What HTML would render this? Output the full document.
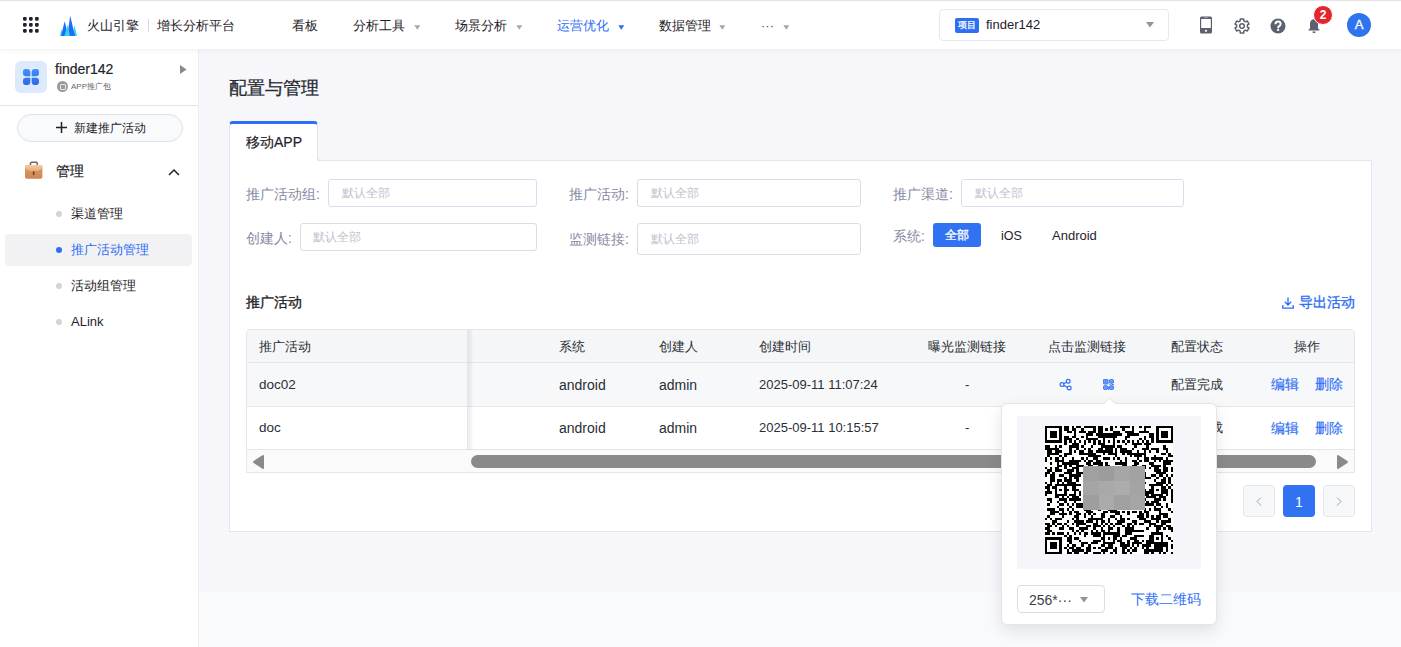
<!DOCTYPE html>
<html><head><meta charset="utf-8">
<style>
*{box-sizing:border-box;margin:0;padding:0}
html,body{width:1401px;height:647px;overflow:hidden}
body{position:relative;background:#f7f7fb;font-family:"Liberation Sans",sans-serif;color:#1f2329;font-size:14px}
.a{position:absolute;white-space:nowrap}
.t{position:absolute;white-space:nowrap;line-height:1}
</style></head><body>

<!-- lower background band -->
<div class="a" style="left:199px;top:592px;width:1202px;height:55px;background:#f9fafc"></div>

<!-- top nav -->
<div class="a" style="left:0;top:0;width:1401px;height:49px;background:#fff;border-top:1px solid #e3e5e4;box-shadow:0 1px 5px rgba(30,30,60,.07);z-index:5">
  <!-- grid icon -->
  <svg class="a" style="left:23px;top:16px" width="16" height="16" viewBox="0 0 16 16"><g fill="#1f2329">
    <rect x="0" y="0" width="3.7" height="3.7" rx="1.1"/><rect x="6" y="0" width="3.7" height="3.7" rx="1.1"/><rect x="12" y="0" width="3.7" height="3.7" rx="1.1"/>
    <rect x="0" y="6" width="3.7" height="3.7" rx="1.1"/><rect x="6" y="6" width="3.7" height="3.7" rx="1.1"/><rect x="12" y="6" width="3.7" height="3.7" rx="1.1"/>
    <rect x="0" y="12" width="3.7" height="3.7" rx="1.1"/><rect x="6" y="12" width="3.7" height="3.7" rx="1.1"/><rect x="12" y="12" width="3.7" height="3.7" rx="1.1"/>
  </g></svg>
  <!-- logo -->
  <svg class="a" style="left:60px;top:14px" width="17" height="21" viewBox="0 -1 17 21">
    <polygon points="0,20 1.5,13.3 3.2,20" fill="#33d7d9"/>
    <polygon points="1,20 4.7,5.2 8.3,20" fill="#1c6dff"/>
    <polygon points="12.3,20 14.5,9.6 17,20" fill="#33d7d9"/>
    <polygon points="7.3,20 10.2,-0.3 15,20" fill="#1c6dff"/>
    <polygon points="4.5,20 7.6,8.7 9.9,20" fill="#33d7d9"/>
  </svg>
  <div class="t" style="left:87px;top:18px;font-size:13px;color:#1f2329">火山引擎</div>
  <div class="a" style="left:148px;top:18px;width:1px;height:13px;background:#d5d9e3"></div>
  <div class="t" style="left:157px;top:18px;font-size:13px;color:#1f2329">增长分析平台</div>

  <div class="t" style="left:292px;top:18px;font-size:13px;color:#1f2329">看板</div>
  <div class="t" style="left:353px;top:18px;font-size:13px;color:#1f2329">分析工具</div>
  <svg class="a" style="left:413.5px;top:23.5px" width="7" height="5" viewBox="0 0 7 5"><polygon points="0.3,0.3 6.3,0.3 3.3,4.8" fill="#a3a8b3"/></svg>
  <div class="t" style="left:455px;top:18px;font-size:13px;color:#1f2329">场景分析</div>
  <svg class="a" style="left:515.5px;top:23.5px" width="7" height="5" viewBox="0 0 7 5"><polygon points="0.3,0.3 6.3,0.3 3.3,4.8" fill="#a3a8b3"/></svg>
  <div class="t" style="left:557px;top:18px;font-size:13px;color:#2e6ef5">运营优化</div>
  <svg class="a" style="left:617.5px;top:23.5px" width="7" height="5" viewBox="0 0 7 5"><polygon points="0.3,0.3 6.3,0.3 3.3,4.8" fill="#2e6ef5"/></svg>
  <div class="t" style="left:659px;top:18px;font-size:13px;color:#1f2329">数据管理</div>
  <svg class="a" style="left:719px;top:23.5px" width="7" height="5" viewBox="0 0 7 5"><polygon points="0.3,0.3 6.3,0.3 3.3,4.8" fill="#a3a8b3"/></svg>
  <div class="t" style="left:761px;top:18px;font-size:13px;color:#4e535b">···</div>
  <svg class="a" style="left:783px;top:23.5px" width="7" height="5" viewBox="0 0 7 5"><polygon points="0.3,0.3 6.3,0.3 3.3,4.8" fill="#a3a8b3"/></svg>

  <!-- project select -->
  <div class="a" style="left:939px;top:8px;width:230px;height:32px;border:1px solid #e8e9ee;border-radius:4px;background:#fff"></div>
  <div class="a" style="left:955px;top:17px;width:24px;height:15px;background:#2e6ef5;border-radius:2px;color:#fff;font-size:8.5px;line-height:15px;text-align:center;-webkit-text-stroke:0.25px #fff">项目</div>
  <div class="t" style="left:986px;top:16.5px;font-size:13px;color:#1f2329">finder142</div>
  <svg class="a" style="left:1146px;top:21px" width="8" height="6" viewBox="0 0 8 6"><polygon points="0,0 8,0 4,5.5" fill="#8f959e"/></svg>

  <!-- phone -->
  <svg class="a" style="left:1200px;top:15px" width="12" height="18" viewBox="0 0 12 18">
    <rect x="0" y="0.5" width="12" height="17" rx="1.5" fill="#5b616e"/>
    <rect x="1.2" y="3" width="9.6" height="9" fill="#fff"/>
    <rect x="4" y="1.3" width="4" height="0.9" fill="#9aa0ab"/>
    <circle cx="6" cy="14.8" r="1.1" fill="#fff"/>
  </svg>
  <!-- gear -->
  <svg class="a" style="left:1234px;top:17px" width="16" height="16" viewBox="0 0 16 16">
    <path d="M6.21 2.80L6.25 0.97L9.75 0.97L9.79 2.80L11.61 3.85L13.22 2.96L14.97 6.00L13.40 6.95L13.40 9.05L14.97 10.00L13.22 13.04L11.61 12.15L9.79 13.20L9.75 15.03L6.25 15.03L6.21 13.20L4.39 12.15L2.78 13.04L1.03 10.00L2.60 9.05L2.60 6.95L1.03 6.00L2.78 2.96L4.39 3.85Z" fill="none" stroke="#5b616e" stroke-width="1.5" stroke-linejoin="round"/>
    <circle cx="8" cy="8" r="2.3" fill="none" stroke="#5b616e" stroke-width="1.5"/>
  </svg>
  <!-- question -->
  <svg class="a" style="left:1270px;top:17px" width="16" height="16" viewBox="0 0 16 16">
    <circle cx="8" cy="8" r="7.5" fill="#5b616e"/>
    <path d="M5.5 6.2c0-1.5 1.1-2.6 2.6-2.6s2.5 1 2.5 2.3c0 1.2-.7 1.7-1.5 2.2-.6.4-.9.8-.9 1.6v.6" fill="none" stroke="#fff" stroke-width="2"/>
    <rect x="7.1" y="11" width="2" height="1.9" fill="#fff"/>
  </svg>
  <!-- bell -->
  <svg class="a" style="left:1308px;top:17px" width="12" height="16" viewBox="0 0 12 16">
    <path d="M6 1.2c2.6 0 4 2 4 4.6v4.6l1.5 1.4v.6H.5v-.6L2 10.4V5.8C2 3.2 3.4 1.2 6 1.2z" fill="#5b616e"/>
    <path d="M4.4 13.6h3.2c0 .9-.7 1.6-1.6 1.6s-1.6-.7-1.6-1.6z" fill="#5b616e"/>
  </svg>
  <div class="a" style="left:1313px;top:4px;width:20px;height:20px;border-radius:50%;background:#e3262b;border:1px solid #fff;color:#fff;font-size:12px;font-weight:bold;line-height:18px;text-align:center">2</div>
  <!-- avatar -->
  <div class="a" style="left:1347px;top:12px;width:24px;height:24px;border-radius:50%;background:#2f74ee;color:#fff;font-size:13px;line-height:24px;text-align:center;-webkit-text-stroke:0.3px #fff">A</div>
</div>

<!-- sidebar -->
<div class="a" style="left:0;top:49px;width:199px;height:598px;background:#fff;border-right:1px solid #eeeff1">
</div>
<div class="a" style="left:15px;top:61px;width:32px;height:32px;border-radius:6px;background:#dde9fd"></div>
<svg class="a" style="left:23px;top:69px" width="16" height="16" viewBox="0 0 16 16">
  <defs><linearGradient id="pg" gradientUnits="userSpaceOnUse" x1="0" y1="0" x2="0" y2="16"><stop offset="0" stop-color="#3f92f8"/><stop offset="1" stop-color="#2d68e6"/></linearGradient></defs>
  <g fill="url(#pg)">
  <path d="M7.3 7.3H3.2A3.2 3.2 0 0 1 0 4.1V2.4A2.4 2.4 0 0 1 2.4 0H4.1A3.2 3.2 0 0 1 7.3 3.2Z"/>
  <path d="M8.7 7.3H12.8A3.2 3.2 0 0 0 16 4.1V2.4A2.4 2.4 0 0 0 13.6 0H11.9A3.2 3.2 0 0 0 8.7 3.2Z"/>
  <path d="M7.3 8.7H3.2A3.2 3.2 0 0 0 0 11.9V13.6A2.4 2.4 0 0 0 2.4 16H4.1A3.2 3.2 0 0 0 7.3 12.8Z"/>
  <path d="M8.7 8.7H12.8A3.2 3.2 0 0 1 16 11.9V13.6A2.4 2.4 0 0 1 13.6 16H11.9A3.2 3.2 0 0 1 8.7 12.8Z"/>
  </g>
</svg>
<div class="t" style="left:55px;top:62px;font-size:14px;color:#1f2329;-webkit-text-stroke:0.2px #1f2329">finder142</div>
<div class="a" style="left:57px;top:81px;width:11px;height:11px;border-radius:50%;background:#9a9a9a"></div>
<div class="a" style="left:59.5px;top:83.5px;width:6px;height:6px;border:1px solid #f4f4f4;border-radius:1px;opacity:.85"></div>
<div class="t" style="left:71px;top:83px;font-size:8px;color:#646a73">APP推广包</div>
<svg class="a" style="left:180px;top:65px" width="7" height="9" viewBox="0 0 7 9"><polygon points="0,0 6.5,4.5 0,9" fill="#8a8a8a"/></svg>
<div class="a" style="left:0;top:105px;width:198px;height:1px;background:#e5e6eb"></div>

<div class="a" style="left:17px;top:114px;width:166px;height:28px;border:1px solid #dfe1e8;border-radius:14px;background:#f9fafc"></div>
<svg class="a" style="left:56px;top:122px" width="11" height="11" viewBox="0 0 11 11"><path d="M5.5 0v11M0 5.5h11" stroke="#1f2329" stroke-width="1.5"/></svg>
<div class="t" style="left:74px;top:122px;font-size:12px;color:#1f2329">新建推广活动</div>

<svg class="a" style="left:25px;top:161px" width="18" height="18" viewBox="0 0 18 18">
  <defs><linearGradient id="bc" x1="0" y1="0" x2="0" y2="1"><stop offset="0" stop-color="#e0a06a"/><stop offset="1" stop-color="#cc8550"/></linearGradient>
  <linearGradient id="bf" x1="0" y1="0" x2="0" y2="1"><stop offset="0" stop-color="#f6cd9c"/><stop offset="1" stop-color="#dea673"/></linearGradient></defs>
  <path d="M5.5 4.3V2.2c0-.6.4-1 1-1h4.7c.6 0 1 .4 1 1v2.1" fill="none" stroke="#6e6660" stroke-width="1.5"/>
  <rect x="0" y="4" width="17.4" height="13.7" rx="2" fill="url(#bc)"/>
  <path d="M0 6c0-1.1.9-2 2-2h13.4c1.1 0 2 .9 2 2v1.2c-2 2.6-4.9 3.7-8.7 3.7S2 9.8 0 7.2z" fill="url(#bf)"/>
  <path d="M0.6 8.3c2.2 2.2 4.9 3 8.1 3s5.9-.8 8.1-3" fill="none" stroke="#b27447" stroke-width=".5" opacity=".6"/>
  <rect x="7.8" y="10" width="1.8" height="4.2" rx=".9" fill="#7a4a24"/>
</svg>
<div class="t" style="left:56px;top:164px;font-size:14px;color:#1f2329;font-weight:400;-webkit-text-stroke:0.2px currentColor">管理</div>
<svg class="a" style="left:168px;top:168px" width="12" height="8" viewBox="0 0 12 8"><path d="M1 7l5-5 5 5" fill="none" stroke="#1f2329" stroke-width="1.5"/></svg>

<div class="a" style="left:5px;top:234px;width:187px;height:32px;border-radius:4px;background:#f2f2f4"></div>
<div class="a" style="left:56px;top:211px;width:6px;height:6px;border-radius:50%;background:#d0d3d9"></div>
<div class="t" style="left:71px;top:207px;font-size:13px;color:#1f2329">渠道管理</div>
<div class="a" style="left:56px;top:247px;width:6px;height:6px;border-radius:50%;background:#2e6ef5"></div>
<div class="t" style="left:71px;top:243px;font-size:13px;color:#2e6ef5">推广活动管理</div>
<div class="a" style="left:56px;top:283px;width:6px;height:6px;border-radius:50%;background:#d0d3d9"></div>
<div class="t" style="left:71px;top:279px;font-size:13px;color:#1f2329">活动组管理</div>
<div class="a" style="left:56px;top:319px;width:6px;height:6px;border-radius:50%;background:#d0d3d9"></div>
<div class="t" style="left:71px;top:315px;font-size:13px;color:#1f2329">ALink</div>

<!-- main -->
<div class="t" style="left:229px;top:78.5px;font-size:18px;color:#262a31;font-weight:400;-webkit-text-stroke:0.3px currentColor">配置与管理</div>

<!-- card -->
<div class="a" style="left:229px;top:160px;width:1143px;height:372px;background:#fff;border:1px solid #e5e6eb"></div>
<!-- tab -->
<div class="a" style="left:229px;top:121px;width:89px;height:40px;background:#fff;border:1px solid #e5e6eb;border-bottom:none;border-top:3px solid #2e6ef5;border-radius:4px 4px 0 0"></div>
<div class="a" style="left:317px;top:150px;width:1055px;height:11px;background:#f7f7fb;border-left:1px solid #e5e6eb;border-bottom:1px solid #e5e6eb;border-bottom-left-radius:4px"></div>
<div class="t" style="left:246px;top:134.5px;font-size:14px;color:#1f2329;-webkit-text-stroke:0.2px #1f2329">移动APP</div>

<!-- filters -->
<div class="t" style="left:246px;top:187px;font-size:14px;color:#8a8aa5">推广活动组:</div>
<div class="a" style="left:328px;top:179px;width:209px;height:28px;border:1px solid #dcdcf0;border-radius:3px;background:#fff"></div>
<div class="t" style="left:342px;top:187px;font-size:12px;color:#c0c0cc">默认全部</div>

<div class="t" style="left:246px;top:231px;font-size:14px;color:#8a8aa5">创建人:</div>
<div class="a" style="left:300px;top:223px;width:237px;height:28px;border:1px solid #dcdce6;border-radius:3px;background:#fff"></div>
<div class="t" style="left:313px;top:231px;font-size:12px;color:#c0c0cc">默认全部</div>

<div class="t" style="left:569px;top:187px;font-size:14px;color:#8a8aa5">推广活动:</div>
<div class="a" style="left:637px;top:179px;width:224px;height:28px;border:1px solid #dcdce6;border-radius:3px;background:#fff"></div>
<div class="t" style="left:651px;top:187px;font-size:12px;color:#c0c0cc">默认全部</div>

<div class="t" style="left:569px;top:232px;font-size:14px;color:#8a8aa5">监测链接:</div>
<div class="a" style="left:637px;top:223px;width:224px;height:32px;border:1px solid #dcdce6;border-radius:3px;background:#fff"></div>
<div class="t" style="left:651px;top:233px;font-size:12px;color:#c0c0cc">默认全部</div>

<div class="t" style="left:893px;top:187px;font-size:14px;color:#8a8aa5">推广渠道:</div>
<div class="a" style="left:961px;top:179px;width:223px;height:28px;border:1px solid #dcdcf0;border-radius:3px;background:#fff"></div>
<div class="t" style="left:975px;top:187px;font-size:12px;color:#c0c0cc">默认全部</div>

<div class="t" style="left:893px;top:229px;font-size:14px;color:#8a8aa5">系统:</div>
<div class="a" style="left:933px;top:223px;width:48px;height:24px;border-radius:3px;background:#3072f2;color:#fff;font-size:12px;line-height:24px;text-align:center;-webkit-text-stroke:0.35px #fff">全部</div>
<div class="t" style="left:1001px;top:229.5px;font-size:12.5px;color:#1f2329">iOS</div>
<div class="t" style="left:1052px;top:229px;font-size:13px;color:#1f2329">Android</div>

<!-- section title -->
<div class="t" style="left:246px;top:295px;font-size:14px;color:#1f2329;font-weight:400;-webkit-text-stroke:0.35px currentColor">推广活动</div>
<svg class="a" style="left:1282px;top:297px" width="12" height="12" viewBox="0 0 12 12"><path d="M6 0.5v7.5M2.8 4.8L6 8l3.2-3.2M0.8 8v3.2h10.4V8" fill="none" stroke="#2e6ef5" stroke-width="1.3"/></svg>
<div class="t" style="left:1299px;top:295px;font-size:14px;color:#2e6ef5;font-weight:400;-webkit-text-stroke:0.35px currentColor">导出活动</div>

<!-- table -->
<div class="a" style="left:246px;top:329px;width:1109px;height:144px;border:1px solid #e5e6eb;border-radius:4px 4px 0 0;overflow:hidden;background:#fff">
  <div class="a" style="left:0;top:0;width:1107px;height:33px;background:#f5f6f8;border-bottom:1px solid #e5e6eb"></div>
  <div class="a" style="left:0;top:33px;width:1107px;height:44px;background:#f7f8fa;border-bottom:1px solid #e5e6eb"></div>
  <div class="a" style="left:0;top:77px;width:1107px;height:43px;background:#fff;border-bottom:1px solid #e5e6eb"></div>
  <div class="a" style="left:0;top:120px;width:1107px;height:23px;background:#fafafa"></div>
  <div class="a" style="left:220px;top:0;width:1px;height:120px;background:#e5e6eb"></div>
  <div class="a" style="left:221px;top:0;width:5px;height:120px;background:linear-gradient(90deg,rgba(20,20,40,.07),rgba(20,20,40,.05) 60%,rgba(0,0,0,0))"></div>
</div>
<div class="t" style="left:259px;top:340px;font-size:13px;color:#2a2e35">推广活动</div>
<div class="t" style="left:559px;top:340px;font-size:13px;color:#2a2e35">系统</div>
<div class="t" style="left:659px;top:340px;font-size:13px;color:#2a2e35">创建人</div>
<div class="t" style="left:759px;top:340px;font-size:13px;color:#2a2e35">创建时间</div>
<div class="t" style="left:928px;top:340px;font-size:13px;color:#2a2e35">曝光监测链接</div>
<div class="t" style="left:1048px;top:340px;font-size:13px;color:#2a2e35">点击监测链接</div>
<div class="t" style="left:1171px;top:340px;font-size:13px;color:#2a2e35">配置状态</div>
<div class="t" style="left:1294px;top:340px;font-size:13px;color:#2a2e35">操作</div>

<div class="t" style="left:259px;top:378px;font-size:13.5px;color:#2a2e35">doc02</div>
<div class="t" style="left:559px;top:378px;font-size:14px;color:#2a2e35">android</div>
<div class="t" style="left:659px;top:378px;font-size:14px;color:#2a2e35">admin</div>
<div class="t" style="left:759px;top:378px;font-size:13px;color:#2a2e35">2025-09-11 11:07:24</div>
<div class="t" style="left:965px;top:378px;font-size:13px;color:#2a2e35">-</div>
<svg class="a" style="left:1059px;top:378px" width="13" height="13" viewBox="0 0 13 13"><g fill="none" stroke="#2e6ef5" stroke-width="1.2"><circle cx="9.2" cy="3.3" r="1.9"/><circle cx="3" cy="6.5" r="1.9"/><circle cx="10.2" cy="10" r="1.9"/><path d="M4.7 5.6l2.8-1.4M4.7 7.4l3.8 1.8"/></g></svg>
<svg class="a" style="left:1103px;top:379px" width="11" height="11" viewBox="0 0 11 11">
<g fill="#6f9bf8" stroke="#3572f5" stroke-width="0.9">
<rect x=".45" y=".45" width="4.6" height="4.6" rx=".4"/>
<rect x="6.45" y=".45" width="4.1" height="3.9" rx="1.3"/>
<rect x=".45" y="6.65" width="4.1" height="3.9" rx="1.3"/>
<rect x="6.45" y="6.65" width="4.1" height="3.9" rx="1.3"/></g>
<g fill="#2e6ef5"><rect x="2.2" y="2.2" width="1.1" height="1.1"/>
<rect x="6.3" y="5.15" width="1.4" height="0.85"/><rect x="8.4" y="5.15" width="2.6" height="0.85"/><rect x="5.2" y="7.3" width="0.85" height="3.7"/></g>
</svg>
<div class="t" style="left:1171px;top:378px;font-size:13px;color:#2a2e35">配置完成</div>
<div class="t" style="left:1271px;top:377px;font-size:14px;color:#2e6ef5;font-weight:400;-webkit-text-stroke:0.15px currentColor">编辑</div>
<div class="t" style="left:1315px;top:377px;font-size:14px;color:#2e6ef5;font-weight:400;-webkit-text-stroke:0.15px currentColor">删除</div>

<div class="t" style="left:259px;top:421px;font-size:13.5px;color:#2a2e35">doc</div>
<div class="t" style="left:559px;top:421px;font-size:14px;color:#2a2e35">android</div>
<div class="t" style="left:659px;top:421px;font-size:14px;color:#2a2e35">admin</div>
<div class="t" style="left:759px;top:421px;font-size:13px;color:#2a2e35">2025-09-11 10:15:57</div>
<div class="t" style="left:965px;top:421px;font-size:13px;color:#2a2e35">-</div>
<div class="t" style="left:1171px;top:421px;font-size:13px;color:#2a2e35">配置完成</div>
<div class="t" style="left:1271px;top:421px;font-size:14px;color:#2e6ef5;font-weight:400;-webkit-text-stroke:0.15px currentColor">编辑</div>
<div class="t" style="left:1315px;top:421px;font-size:14px;color:#2e6ef5;font-weight:400;-webkit-text-stroke:0.15px currentColor">删除</div>

<!-- scrollbar -->
<svg class="a" style="left:253px;top:455px" width="11" height="14" viewBox="0 0 11 14"><polygon points="10,1.2 10,12.8 1.2,7" fill="#8a8a8a" stroke="#8a8a8a" stroke-width="2.2" stroke-linejoin="round"/></svg>
<div class="a" style="left:471px;top:455px;width:845px;height:13px;border-radius:6.5px;background:#8a8a8a"></div>
<svg class="a" style="left:1337px;top:455px" width="11" height="14" viewBox="0 0 11 14"><polygon points="1,1.2 1,12.8 9.8,7" fill="#8a8a8a" stroke="#8a8a8a" stroke-width="2.2" stroke-linejoin="round"/></svg>

<!-- pagination -->
<div class="a" style="left:1243px;top:485px;width:32px;height:32px;border:1px solid #e6e7eb;border-radius:4px;background:#f7f8fa"></div>
<svg class="a" style="left:1256px;top:497px" width="6" height="9" viewBox="0 0 6 9"><path d="M5 0.5L1 4.5l4 4" fill="none" stroke="#9ea3ab" stroke-width="1"/></svg>
<div class="a" style="left:1283px;top:485px;width:32px;height:32px;border-radius:4px;background:#3072f2;color:#fff;font-size:14px;line-height:34px;text-align:center">1</div>
<div class="a" style="left:1323px;top:485px;width:32px;height:32px;border:1px solid #e6e7eb;border-radius:4px;background:#f7f8fa"></div>
<svg class="a" style="left:1336px;top:497px" width="6" height="9" viewBox="0 0 6 9"><path d="M1 0.5l4 4-4 4" fill="none" stroke="#9ea3ab" stroke-width="1"/></svg>

<!-- popover -->
<div class="a" style="left:1001px;top:403px;width:216px;height:222px;background:#fff;border-radius:6px;border:1px solid #e4e5ea;box-shadow:0 6px 16px rgba(0,0,0,.10);z-index:10">
  <div class="a" style="left:102.5px;top:-5px;width:9px;height:9px;background:#fff;transform:rotate(45deg);border-left:1px solid #e4e5ea;border-top:1px solid #e4e5ea"></div>
  <div class="a" style="left:15px;top:12px;width:184px;height:153px;background:#f5f5fa"></div>
  <div class="a" style="left:43px;top:22px;width:128px;height:128px"><svg width="128" height="128" viewBox="0 0 53 53" shape-rendering="crispEdges" style="position:absolute;left:0;top:0"><rect width="53" height="53" fill="#fff"/><path fill="#000" d="M0 0h7v1h-7zM8 0h2v1h-2zM11 0h1v1h-1zM13 0h2v1h-2zM16 0h5v1h-5zM22 0h2v1h-2zM27 0h1v1h-1zM29 0h1v1h-1zM31 0h4v1h-4zM36 0h1v1h-1zM39 0h1v1h-1zM41 0h3v1h-3zM46 0h7v1h-7zM0 1h1v1h-1zM6 1h1v1h-1zM8 1h2v1h-2zM11 1h2v1h-2zM15 1h1v1h-1zM20 1h1v1h-1zM22 1h2v1h-2zM25 1h1v1h-1zM27 1h1v1h-1zM32 1h1v1h-1zM36 1h1v1h-1zM41 1h1v1h-1zM46 1h1v1h-1zM52 1h1v1h-1zM0 2h1v1h-1zM2 2h3v1h-3zM6 2h1v1h-1zM9 2h2v1h-2zM12 2h1v1h-1zM14 2h3v1h-3zM18 2h3v1h-3zM22 2h2v1h-2zM28 2h3v1h-3zM33 2h4v1h-4zM39 2h4v1h-4zM46 2h1v1h-1zM48 2h3v1h-3zM52 2h1v1h-1zM0 3h1v1h-1zM2 3h3v1h-3zM6 3h1v1h-1zM12 3h1v1h-1zM17 3h3v1h-3zM21 3h11v1h-11zM34 3h5v1h-5zM43 3h2v1h-2zM46 3h1v1h-1zM48 3h3v1h-3zM52 3h1v1h-1zM0 4h1v1h-1zM2 4h3v1h-3zM6 4h1v1h-1zM8 4h2v1h-2zM11 4h2v1h-2zM15 4h1v1h-1zM17 4h1v1h-1zM22 4h8v1h-8zM33 4h2v1h-2zM41 4h1v1h-1zM43 4h2v1h-2zM46 4h1v1h-1zM48 4h3v1h-3zM52 4h1v1h-1zM0 5h1v1h-1zM6 5h1v1h-1zM8 5h3v1h-3zM13 5h1v1h-1zM17 5h5v1h-5zM24 5h1v1h-1zM28 5h1v1h-1zM33 5h1v1h-1zM39 5h1v1h-1zM41 5h1v1h-1zM44 5h1v1h-1zM46 5h1v1h-1zM52 5h1v1h-1zM0 6h7v1h-7zM8 6h1v1h-1zM10 6h1v1h-1zM12 6h1v1h-1zM14 6h1v1h-1zM16 6h1v1h-1zM18 6h1v1h-1zM20 6h1v1h-1zM22 6h1v1h-1zM24 6h1v1h-1zM26 6h1v1h-1zM28 6h1v1h-1zM30 6h1v1h-1zM32 6h1v1h-1zM34 6h1v1h-1zM36 6h1v1h-1zM38 6h1v1h-1zM40 6h1v1h-1zM42 6h1v1h-1zM44 6h1v1h-1zM46 6h7v1h-7zM8 7h1v1h-1zM11 7h3v1h-3zM16 7h1v1h-1zM20 7h1v1h-1zM22 7h3v1h-3zM28 7h1v1h-1zM33 7h1v1h-1zM36 7h4v1h-4zM41 7h3v1h-3zM0 8h2v1h-2zM4 8h1v1h-1zM6 8h1v1h-1zM10 8h4v1h-4zM15 8h1v1h-1zM19 8h1v1h-1zM23 8h6v1h-6zM30 8h2v1h-2zM37 8h1v1h-1zM42 8h1v1h-1zM49 8h1v1h-1zM0 9h6v1h-6zM10 9h1v1h-1zM13 9h1v1h-1zM16 9h1v1h-1zM18 9h1v1h-1zM22 9h2v1h-2zM25 9h3v1h-3zM29 9h1v1h-1zM31 9h3v1h-3zM36 9h1v1h-1zM40 9h3v1h-3zM44 9h3v1h-3zM49 9h2v1h-2zM1 10h2v1h-2zM4 10h3v1h-3zM10 10h1v1h-1zM12 10h1v1h-1zM14 10h2v1h-2zM18 10h2v1h-2zM21 10h7v1h-7zM29 10h1v1h-1zM31 10h5v1h-5zM38 10h1v1h-1zM41 10h1v1h-1zM43 10h1v1h-1zM46 10h1v1h-1zM50 10h1v1h-1zM1 11h5v1h-5zM8 11h3v1h-3zM14 11h7v1h-7zM24 11h1v1h-1zM26 11h4v1h-4zM32 11h1v1h-1zM34 11h8v1h-8zM48 11h2v1h-2zM51 11h1v1h-1zM1 12h1v1h-1zM6 12h1v1h-1zM8 12h1v1h-1zM18 12h5v1h-5zM29 12h1v1h-1zM35 12h1v1h-1zM37 12h3v1h-3zM41 12h1v1h-1zM45 12h1v1h-1zM51 12h2v1h-2zM0 13h1v1h-1zM2 13h1v1h-1zM4 13h2v1h-2zM7 13h1v1h-1zM11 13h1v1h-1zM15 13h1v1h-1zM17 13h1v1h-1zM20 13h2v1h-2zM24 13h3v1h-3zM28 13h1v1h-1zM30 13h1v1h-1zM33 13h1v1h-1zM38 13h1v1h-1zM41 13h2v1h-2zM44 13h5v1h-5zM50 13h1v1h-1zM0 14h1v1h-1zM4 14h4v1h-4zM10 14h5v1h-5zM16 14h1v1h-1zM18 14h2v1h-2zM21 14h2v1h-2zM31 14h1v1h-1zM33 14h1v1h-1zM36 14h2v1h-2zM39 14h1v1h-1zM41 14h2v1h-2zM45 14h1v1h-1zM47 14h1v1h-1zM49 14h4v1h-4zM2 15h1v1h-1zM5 15h1v1h-1zM7 15h7v1h-7zM17 15h2v1h-2zM20 15h4v1h-4zM25 15h1v1h-1zM29 15h5v1h-5zM37 15h2v1h-2zM43 15h2v1h-2zM49 15h3v1h-3zM5 16h2v1h-2zM8 16h1v1h-1zM10 16h1v1h-1zM13 16h3v1h-3zM18 16h2v1h-2zM22 16h2v1h-2zM25 16h2v1h-2zM32 16h2v1h-2zM36 16h2v1h-2zM40 16h2v1h-2zM44 16h4v1h-4zM49 16h1v1h-1zM0 17h1v1h-1zM2 17h1v1h-1zM4 17h2v1h-2zM8 17h1v1h-1zM11 17h3v1h-3zM16 17h3v1h-3zM20 17h4v1h-4zM29 17h2v1h-2zM33 17h1v1h-1zM35 17h7v1h-7zM43 17h1v1h-1zM45 17h2v1h-2zM49 17h2v1h-2zM52 17h1v1h-1zM1 18h2v1h-2zM4 18h3v1h-3zM9 18h3v1h-3zM13 18h1v1h-1zM16 18h2v1h-2zM20 18h1v1h-1zM22 18h3v1h-3zM29 18h2v1h-2zM34 18h3v1h-3zM39 18h1v1h-1zM45 18h3v1h-3zM49 18h2v1h-2zM52 18h1v1h-1zM0 19h2v1h-2zM3 19h1v1h-1zM8 19h3v1h-3zM13 19h3v1h-3zM21 19h1v1h-1zM23 19h1v1h-1zM25 19h1v1h-1zM27 19h4v1h-4zM33 19h2v1h-2zM37 19h1v1h-1zM41 19h1v1h-1zM46 19h4v1h-4zM0 20h1v1h-1zM2 20h2v1h-2zM6 20h2v1h-2zM10 20h5v1h-5zM17 20h3v1h-3zM21 20h3v1h-3zM26 20h3v1h-3zM31 20h2v1h-2zM34 20h3v1h-3zM38 20h1v1h-1zM40 20h2v1h-2zM44 20h2v1h-2zM47 20h2v1h-2zM50 20h1v1h-1zM52 20h1v1h-1zM2 21h2v1h-2zM8 21h1v1h-1zM10 21h1v1h-1zM12 21h2v1h-2zM16 21h1v1h-1zM20 21h2v1h-2zM25 21h1v1h-1zM27 21h1v1h-1zM31 21h1v1h-1zM33 21h2v1h-2zM37 21h3v1h-3zM41 21h3v1h-3zM46 21h1v1h-1zM49 21h1v1h-1zM51 21h1v1h-1zM2 22h2v1h-2zM5 22h2v1h-2zM8 22h3v1h-3zM13 22h1v1h-1zM16 22h2v1h-2zM19 22h5v1h-5zM25 22h1v1h-1zM27 22h1v1h-1zM31 22h1v1h-1zM33 22h1v1h-1zM35 22h1v1h-1zM40 22h1v1h-1zM45 22h1v1h-1zM48 22h2v1h-2zM51 22h1v1h-1zM0 23h1v1h-1zM2 23h1v1h-1zM5 23h1v1h-1zM7 23h1v1h-1zM9 23h4v1h-4zM16 23h1v1h-1zM18 23h1v1h-1zM21 23h1v1h-1zM26 23h1v1h-1zM29 23h1v1h-1zM31 23h1v1h-1zM34 23h1v1h-1zM36 23h2v1h-2zM39 23h1v1h-1zM41 23h1v1h-1zM46 23h4v1h-4zM51 23h1v1h-1zM1 24h2v1h-2zM4 24h11v1h-11zM17 24h1v1h-1zM20 24h1v1h-1zM22 24h8v1h-8zM33 24h3v1h-3zM38 24h1v1h-1zM40 24h1v1h-1zM43 24h6v1h-6zM50 24h1v1h-1zM52 24h1v1h-1zM0 25h2v1h-2zM3 25h2v1h-2zM8 25h1v1h-1zM11 25h2v1h-2zM17 25h4v1h-4zM24 25h1v1h-1zM28 25h2v1h-2zM34 25h6v1h-6zM44 25h1v1h-1zM48 25h2v1h-2zM51 25h1v1h-1zM1 26h1v1h-1zM4 26h1v1h-1zM6 26h1v1h-1zM8 26h2v1h-2zM11 26h3v1h-3zM17 26h1v1h-1zM19 26h2v1h-2zM24 26h1v1h-1zM26 26h1v1h-1zM28 26h1v1h-1zM35 26h1v1h-1zM38 26h2v1h-2zM41 26h1v1h-1zM43 26h2v1h-2zM46 26h1v1h-1zM48 26h3v1h-3zM52 26h1v1h-1zM0 27h3v1h-3zM4 27h1v1h-1zM8 27h1v1h-1zM12 27h1v1h-1zM14 27h1v1h-1zM18 27h1v1h-1zM22 27h3v1h-3zM28 27h3v1h-3zM36 27h3v1h-3zM40 27h5v1h-5zM48 27h3v1h-3zM52 27h1v1h-1zM0 28h1v1h-1zM4 28h5v1h-5zM10 28h3v1h-3zM14 28h1v1h-1zM17 28h1v1h-1zM19 28h1v1h-1zM21 28h8v1h-8zM31 28h1v1h-1zM35 28h1v1h-1zM37 28h1v1h-1zM39 28h1v1h-1zM41 28h2v1h-2zM44 28h5v1h-5zM50 28h1v1h-1zM52 28h1v1h-1zM4 29h2v1h-2zM7 29h1v1h-1zM9 29h1v1h-1zM11 29h3v1h-3zM16 29h1v1h-1zM18 29h1v1h-1zM24 29h3v1h-3zM30 29h2v1h-2zM34 29h1v1h-1zM37 29h3v1h-3zM42 29h4v1h-4zM47 29h3v1h-3zM52 29h1v1h-1zM1 30h2v1h-2zM6 30h3v1h-3zM10 30h5v1h-5zM20 30h1v1h-1zM22 30h1v1h-1zM25 30h1v1h-1zM28 30h2v1h-2zM37 30h2v1h-2zM40 30h2v1h-2zM45 30h3v1h-3zM49 30h1v1h-1zM52 30h1v1h-1zM2 31h1v1h-1zM5 31h1v1h-1zM8 31h1v1h-1zM12 31h1v1h-1zM20 31h1v1h-1zM22 31h1v1h-1zM24 31h1v1h-1zM26 31h1v1h-1zM28 31h7v1h-7zM36 31h3v1h-3zM42 31h1v1h-1zM44 31h3v1h-3zM52 31h1v1h-1zM1 32h1v1h-1zM6 32h2v1h-2zM9 32h1v1h-1zM11 32h1v1h-1zM13 32h6v1h-6zM20 32h3v1h-3zM24 32h1v1h-1zM27 32h1v1h-1zM30 32h1v1h-1zM34 32h1v1h-1zM37 32h2v1h-2zM41 32h4v1h-4zM46 32h2v1h-2zM50 32h1v1h-1zM5 33h1v1h-1zM10 33h1v1h-1zM13 33h3v1h-3zM17 33h1v1h-1zM19 33h1v1h-1zM24 33h1v1h-1zM30 33h2v1h-2zM33 33h1v1h-1zM36 33h1v1h-1zM40 33h1v1h-1zM45 33h1v1h-1zM48 33h1v1h-1zM50 33h1v1h-1zM1 34h3v1h-3zM6 34h2v1h-2zM9 34h1v1h-1zM11 34h1v1h-1zM16 34h3v1h-3zM22 34h1v1h-1zM26 34h4v1h-4zM41 34h1v1h-1zM43 34h1v1h-1zM45 34h3v1h-3zM51 34h1v1h-1zM2 35h4v1h-4zM7 35h1v1h-1zM10 35h1v1h-1zM12 35h2v1h-2zM17 35h3v1h-3zM24 35h2v1h-2zM27 35h4v1h-4zM32 35h1v1h-1zM34 35h1v1h-1zM36 35h2v1h-2zM39 35h1v1h-1zM41 35h2v1h-2zM47 35h1v1h-1zM52 35h1v1h-1zM2 36h2v1h-2zM6 36h3v1h-3zM10 36h1v1h-1zM13 36h2v1h-2zM16 36h1v1h-1zM18 36h1v1h-1zM20 36h1v1h-1zM23 36h2v1h-2zM29 36h2v1h-2zM34 36h1v1h-1zM39 36h2v1h-2zM42 36h1v1h-1zM47 36h4v1h-4zM1 37h1v1h-1zM7 37h1v1h-1zM12 37h2v1h-2zM16 37h1v1h-1zM19 37h1v1h-1zM23 37h2v1h-2zM27 37h2v1h-2zM31 37h1v1h-1zM38 37h3v1h-3zM42 37h1v1h-1zM44 37h1v1h-1zM46 37h2v1h-2zM49 37h2v1h-2zM0 38h1v1h-1zM2 38h1v1h-1zM4 38h3v1h-3zM11 38h1v1h-1zM13 38h1v1h-1zM18 38h6v1h-6zM26 38h1v1h-1zM29 38h1v1h-1zM31 38h2v1h-2zM34 38h1v1h-1zM39 38h3v1h-3zM44 38h4v1h-4zM51 38h1v1h-1zM3 39h2v1h-2zM9 39h1v1h-1zM12 39h4v1h-4zM17 39h3v1h-3zM21 39h1v1h-1zM23 39h2v1h-2zM26 39h1v1h-1zM30 39h3v1h-3zM36 39h2v1h-2zM41 39h3v1h-3zM46 39h1v1h-1zM48 39h4v1h-4zM0 40h2v1h-2zM3 40h1v1h-1zM5 40h2v1h-2zM8 40h1v1h-1zM11 40h1v1h-1zM13 40h4v1h-4zM20 40h2v1h-2zM23 40h1v1h-1zM25 40h1v1h-1zM27 40h1v1h-1zM29 40h3v1h-3zM34 40h2v1h-2zM37 40h1v1h-1zM39 40h2v1h-2zM43 40h3v1h-3zM48 40h2v1h-2zM1 41h2v1h-2zM4 41h1v1h-1zM7 41h1v1h-1zM9 41h1v1h-1zM13 41h1v1h-1zM17 41h2v1h-2zM20 41h3v1h-3zM24 41h1v1h-1zM26 41h1v1h-1zM28 41h1v1h-1zM32 41h1v1h-1zM34 41h1v1h-1zM36 41h1v1h-1zM43 41h1v1h-1zM45 41h4v1h-4zM50 41h2v1h-2zM0 42h2v1h-2zM6 42h2v1h-2zM10 42h2v1h-2zM14 42h4v1h-4zM20 42h1v1h-1zM23 42h1v1h-1zM26 42h2v1h-2zM30 42h1v1h-1zM33 42h4v1h-4zM42 42h1v1h-1zM46 42h2v1h-2zM49 42h1v1h-1zM51 42h2v1h-2zM1 43h2v1h-2zM11 43h1v1h-1zM13 43h1v1h-1zM15 43h1v1h-1zM19 43h1v1h-1zM21 43h1v1h-1zM23 43h2v1h-2zM26 43h1v1h-1zM30 43h1v1h-1zM33 43h8v1h-8zM46 43h1v1h-1zM52 43h1v1h-1zM0 44h2v1h-2zM3 44h1v1h-1zM5 44h3v1h-3zM9 44h1v1h-1zM12 44h1v1h-1zM14 44h1v1h-1zM16 44h2v1h-2zM19 44h4v1h-4zM24 44h7v1h-7zM33 44h3v1h-3zM44 44h5v1h-5zM8 45h1v1h-1zM10 45h1v1h-1zM16 45h1v1h-1zM20 45h3v1h-3zM24 45h1v1h-1zM28 45h3v1h-3zM32 45h2v1h-2zM37 45h4v1h-4zM43 45h2v1h-2zM48 45h1v1h-1zM50 45h1v1h-1zM0 46h7v1h-7zM9 46h2v1h-2zM12 46h2v1h-2zM23 46h2v1h-2zM26 46h1v1h-1zM28 46h2v1h-2zM31 46h1v1h-1zM35 46h3v1h-3zM43 46h2v1h-2zM46 46h1v1h-1zM48 46h1v1h-1zM51 46h1v1h-1zM0 47h1v1h-1zM6 47h1v1h-1zM9 47h2v1h-2zM14 47h1v1h-1zM20 47h3v1h-3zM24 47h1v1h-1zM28 47h1v1h-1zM30 47h2v1h-2zM34 47h1v1h-1zM37 47h2v1h-2zM40 47h1v1h-1zM42 47h3v1h-3zM48 47h1v1h-1zM52 47h1v1h-1zM0 48h1v1h-1zM2 48h3v1h-3zM6 48h1v1h-1zM10 48h1v1h-1zM15 48h3v1h-3zM19 48h3v1h-3zM24 48h5v1h-5zM31 48h2v1h-2zM34 48h1v1h-1zM36 48h4v1h-4zM42 48h9v1h-9zM0 49h1v1h-1zM2 49h3v1h-3zM6 49h1v1h-1zM9 49h1v1h-1zM11 49h2v1h-2zM15 49h1v1h-1zM18 49h1v1h-1zM23 49h2v1h-2zM26 49h2v1h-2zM31 49h4v1h-4zM36 49h1v1h-1zM38 49h1v1h-1zM40 49h4v1h-4zM45 49h6v1h-6zM52 49h1v1h-1zM0 50h1v1h-1zM2 50h3v1h-3zM6 50h1v1h-1zM8 50h1v1h-1zM10 50h2v1h-2zM13 50h2v1h-2zM17 50h2v1h-2zM20 50h1v1h-1zM22 50h1v1h-1zM25 50h3v1h-3zM29 50h1v1h-1zM32 50h2v1h-2zM35 50h1v1h-1zM37 50h1v1h-1zM40 50h1v1h-1zM42 50h1v1h-1zM45 50h4v1h-4zM50 50h1v1h-1zM52 50h1v1h-1zM0 51h1v1h-1zM6 51h1v1h-1zM9 51h1v1h-1zM11 51h5v1h-5zM17 51h2v1h-2zM23 51h3v1h-3zM28 51h2v1h-2zM32 51h1v1h-1zM34 51h1v1h-1zM36 51h2v1h-2zM41 51h8v1h-8zM50 51h1v1h-1zM0 52h7v1h-7zM9 52h2v1h-2zM12 52h2v1h-2zM16 52h2v1h-2zM20 52h3v1h-3zM24 52h1v1h-1zM27 52h1v1h-1zM29 52h1v1h-1zM32 52h2v1h-2zM35 52h1v1h-1zM41 52h2v1h-2zM44 52h1v1h-1zM47 52h1v1h-1zM49 52h1v1h-1zM52 52h1v1h-1z"/></svg>
    <div class="a" style="left:38px;top:40px;width:62px;height:44px;background:#a3a3a3;display:grid;grid-template-columns:repeat(4,1fr);grid-template-rows:repeat(3,1fr)">
<i style="background:#a0a0a0"></i><i style="background:#9c9c9c"></i><i style="background:#a6a6a6"></i><i style="background:#a2a2a2"></i>
<i style="background:#a5a5a5"></i><i style="background:#a9a9a9"></i><i style="background:#acacac"></i><i style="background:#a4a4a4"></i>
<i style="background:#9e9e9e"></i><i style="background:#aaaaaa"></i><i style="background:#a1a1a1"></i><i style="background:#a6a6a6"></i></div>
  </div>
  <div class="a" style="left:15px;top:181px;width:88px;height:28px;border:1px solid #dcdee3;border-radius:4px"></div>
  <div class="t" style="left:27px;top:189px;font-size:14px;color:#3a3f47">256*···</div>
  <svg class="a" style="left:78px;top:193px" width="8" height="6" viewBox="0 0 8 6"><polygon points="0,0 8,0 4,5.5" fill="#8f959e"/></svg>
  <div class="t" style="left:129px;top:188px;font-size:14px;color:#2e6ef5">下载二维码</div>
</div>

</body></html>
